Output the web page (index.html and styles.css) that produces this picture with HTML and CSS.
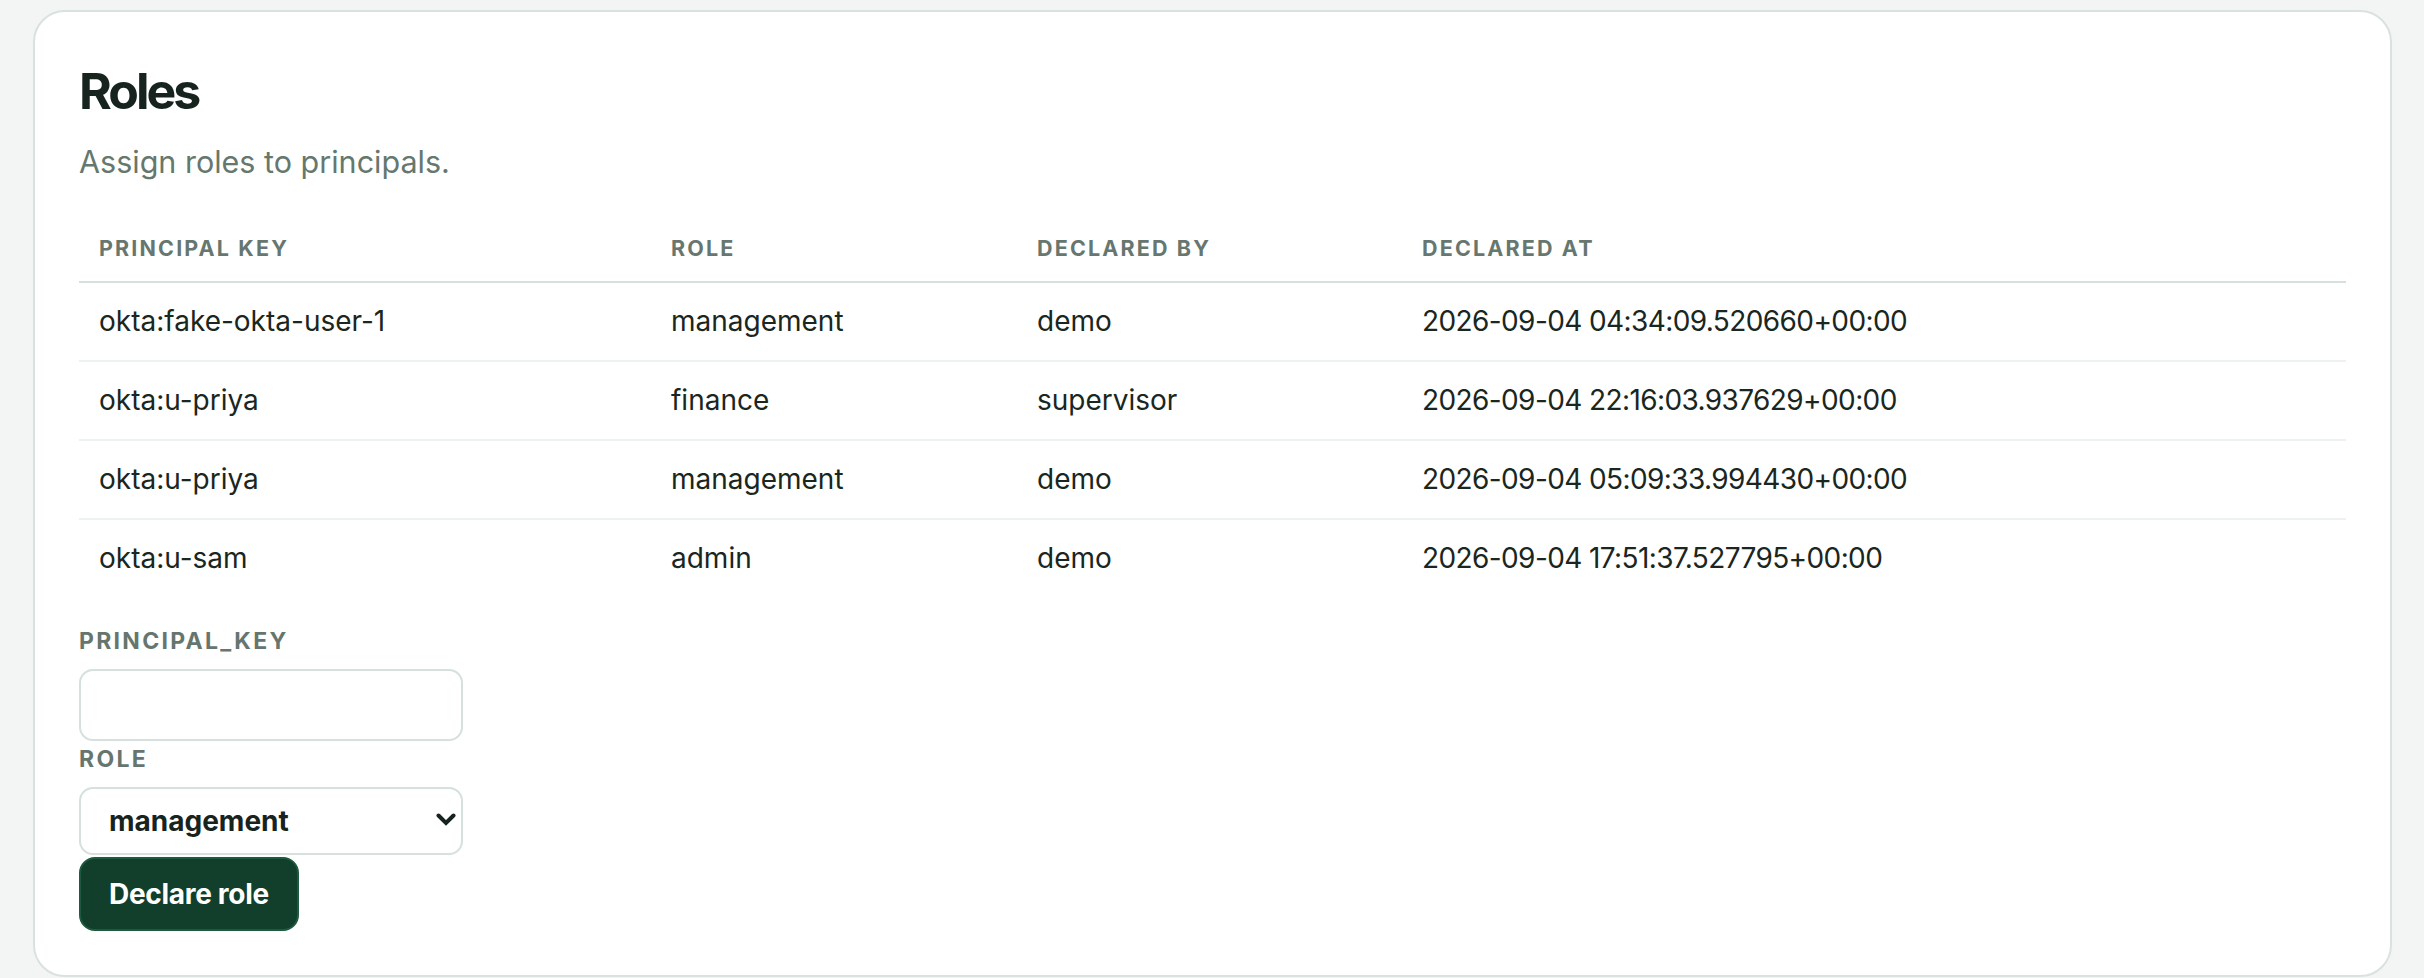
FILE: index.html
```html
<!DOCTYPE html>
<html lang="en">

<head>
    <meta charset="UTF-8">
    <meta name="viewport" content="width=device-width, initial-scale=1.0">
    <title>Roles</title>
    <link rel="stylesheet" href="styles.css">
</head>

<body>
    <div class="card">
        <h1>Roles</h1>
        <p class="subtitle">Assign roles to principals.</p>

        <table class="roles-table">
            <colgroup>
                <col class="col-key">
                <col class="col-role">
                <col class="col-by">
                <col>
            </colgroup>
            <thead>
                <tr>
                    <th>Principal key</th>
                    <th>Role</th>
                    <th>Declared by</th>
                    <th>Declared at</th>
                </tr>
            </thead>
            <tbody>
                <tr>
                    <td>okta:fake-okta-user-1</td>
                    <td>management</td>
                    <td>demo</td>
                    <td class="ts">2026-09-04 04:34:09.520660+00:00</td>
                </tr>
                <tr>
                    <td>okta:u-priya</td>
                    <td>finance</td>
                    <td>supervisor</td>
                    <td class="ts">2026-09-04 22:16:03.937629+00:00</td>
                </tr>
                <tr>
                    <td>okta:u-priya</td>
                    <td>management</td>
                    <td>demo</td>
                    <td class="ts">2026-09-04 05:09:33.994430+00:00</td>
                </tr>
                <tr>
                    <td>okta:u-sam</td>
                    <td>admin</td>
                    <td>demo</td>
                    <td class="ts">2026-09-04 17:51:37.527795+00:00</td>
                </tr>
            </tbody>
        </table>

        <form class="role-form">
            <label for="principal_key">principal_key</label>
            <input type="text" id="principal_key" name="principal_key">

            <label for="role">role</label>
            <div class="select-wrap">
                <select id="role" name="role">
                    <option>management</option>
                    <option>finance</option>
                    <option>supervisor</option>
                    <option>admin</option>
                </select>
                <!-- chevron drawn over the select -->
                <svg class="chevron" width="20" height="13" viewBox="0 0 20 13">
                    <path d="M2.5 2.5 L10 10 L17.5 2.5" fill="none" stroke="#17241d" stroke-width="4" stroke-linecap="round" stroke-linejoin="miter" />
                </svg>
            </div>

            <button type="submit">Declare role</button>
        </form>
    </div>
</body>

</html>
```

FILE: styles.css
```css
body {
    margin: 0;
    padding: 10px 32px 0 33px;
    background-color: #f3f5f4;
    font-family: Inter, "Noto Sans", sans-serif;
    color: #1a2620;
}

.card {
    background-color: #fff;
    border: 2px solid #d9e2de;
    border-radius: 32px;
    padding: 50px 44px 44px 44px;
}

h1 {
    margin: 0;
    font-size: 50px;
    line-height: 58px;
    font-weight: 700;
    letter-spacing: -3px;
    color: #17241d;
}

.subtitle {
    margin: 20px 0 0 0;
    font-size: 30.5px;
    line-height: 43px;
    color: #66776e;
}

/* Table */
.roles-table {
    width: 100%;
    margin-top: 33px;
    border-collapse: collapse;
    table-layout: fixed;
}

.col-key {
    width: 572px;
}

.col-role {
    width: 366px;
}

.col-by {
    width: 385px;
}

.roles-table th {
    text-align: left;
    padding: 17px 20px 18px 20px;
    font-size: 21.5px;
    line-height: 30px;
    font-weight: 700;
    letter-spacing: 0.1em;
    text-transform: uppercase;
    color: #67776f;
    border-bottom: 2px solid #d6e0dc;
}

.roles-table td {
    padding: 18px 20px;
    font-size: 28px;
    line-height: 41px;
    border-bottom: 2px solid #edf1ef;
    white-space: nowrap;
}

.roles-table td.ts {
    letter-spacing: -0.6px;
}

.roles-table tbody tr:last-child td {
    border-bottom: none;
}

/* Form */
.role-form {
    margin-top: 32px;
}

.role-form label {
    display: block;
    font-size: 23px;
    line-height: 25px;
    font-weight: 700;
    letter-spacing: 0.1em;
    text-transform: uppercase;
    color: #66766e;
    margin-bottom: 15px;
}

.role-form input {
    display: block;
    box-sizing: border-box;
    width: 384px;
    height: 72px;
    margin-bottom: 6px;
    border: 2px solid #d6e0dc;
    border-radius: 14px;
    font-family: inherit;
    font-size: 28px;
    padding: 0 28px;
}

.select-wrap {
    position: relative;
    width: 384px;
    margin-bottom: 2px;
}

.select-wrap select {
    display: block;
    box-sizing: border-box;
    width: 384px;
    height: 68px;
    border: 2px solid #d6e0dc;
    border-radius: 14px;
    background-color: #fff;
    appearance: none;
    -webkit-appearance: none;
    font-family: inherit;
    font-size: 28px;
    font-weight: 700;
    color: #17241d;
    padding: 0 28px;
}

.chevron {
    position: absolute;
    right: 7px;
    top: 26px;
    pointer-events: none;
}

.role-form button {
    display: block;
    box-sizing: border-box;
    height: 74px;
    padding: 0 28px;
    background-color: #113f2c;
    color: #fff;
    border: 2px solid #1d5a3f;
    border-radius: 16px;
    font-family: inherit;
    font-size: 28px;
    font-weight: 700;
    letter-spacing: -0.3px;
    cursor: pointer;
}
```
